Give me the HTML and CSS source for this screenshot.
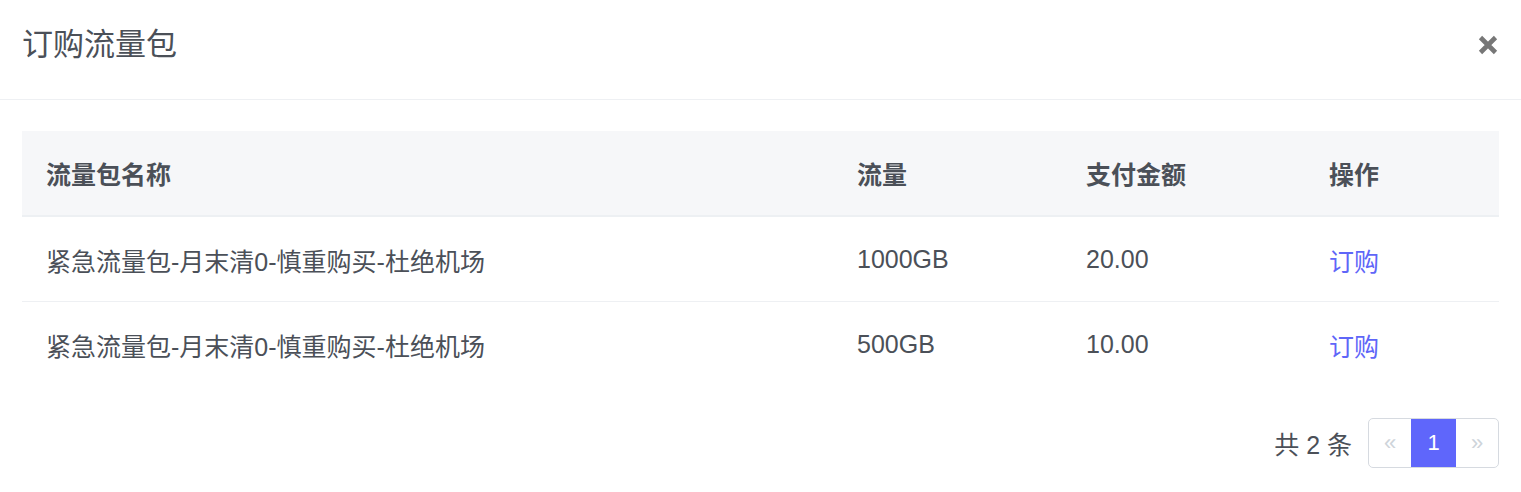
FILE: index.html
```html
<!DOCTYPE html>
<html lang="zh-CN">
<head>
<meta charset="utf-8">
<title>订购流量包</title>
<link rel="stylesheet" href="styles.css">
</head>
<body>
<div class="modal">
  <div class="modal-header">
    <h3 class="modal-title">订购流量包</h3>
    <button class="close" type="button" aria-label="关闭">
      <svg width="20" height="20" viewBox="0 0 20 20"><path d="M2.5 2.5 L17.5 17.5 M17.5 2.5 L2.5 17.5" stroke="#777" stroke-width="4.6" stroke-linecap="butt"/></svg>
    </button>
  </div>
  <div class="modal-body">
    <table class="table">
      <colgroup>
        <col class="c1"><col class="c2"><col class="c3"><col class="c4">
      </colgroup>
      <thead>
        <tr><th>流量包名称</th><th>流量</th><th>支付金额</th><th>操作</th></tr>
      </thead>
      <tbody>
        <tr><td>紧急流量包-月末清0-慎重购买-杜绝机场</td><td>1000GB</td><td>20.00</td><td><a class="link" href="#">订购</a></td></tr>
        <tr><td>紧急流量包-月末清0-慎重购买-杜绝机场</td><td>500GB</td><td>10.00</td><td><a class="link" href="#">订购</a></td></tr>
      </tbody>
    </table>
    <div class="footer">
      <span class="total">共 2 条</span>
      <div class="pager">
        <span class="pg disabled">«</span>
        <span class="pg active">1</span>
        <span class="pg disabled">»</span>
      </div>
    </div>
  </div>
</div>
</body>
</html>
```

FILE: styles.css
```css
* { box-sizing: border-box; }
html, body { margin: 0; padding: 0; background: #fff; }
body {
  font-family: "Liberation Sans", "Noto Sans CJK SC", sans-serif;
  color: #495057;
}
.modal { width: 1521px; }
.modal-header {
  height: 100px;
  border-bottom: 1px solid #eef0f3;
  display: flex;
  align-items: center;
  justify-content: space-between;
  padding: 0 22px 10px 22px;
}
.modal-title {
  margin: 0;
  font-size: 31px;
  font-weight: 400;
  color: #4b5058;
  line-height: 1;
}
.close {
  border: 0;
  background: none;
  padding: 0;
  margin-right: 1px;
  display: flex;
  cursor: pointer;
}
.modal-body { padding: 31px 22px 0 22px; }
.table {
  width: 1477px;
  border-collapse: collapse;
  table-layout: fixed;
}
.c1 { width: 811px; }
.c2 { width: 229px; }
.c3 { width: 243px; }
.c4 { width: 194px; }
.table th {
  background: #f6f7f9;
  height: 85px;
  text-align: left;
  padding: 0 24px;
  font-size: 25px;
  font-weight: 700;
  color: #4b5058;
  border-bottom: 2px solid #edf0f3;
}
.table td {
  height: 85px;
  padding: 2px 24px 0 24px;
  font-size: 25px;
  color: #4b5058;
  border-top: 1px solid #eef0f3;
}
.table tbody tr:first-child td { border-top: 0; }
.link { color: #5f66f8; text-decoration: none; }
.footer {
  display: flex;
  justify-content: flex-end;
  align-items: center;
  gap: 16px;
  margin-top: 32px;
}
.total { font-size: 25px; color: #4b5058; }
.pager {
  display: flex;
  height: 50px;
  border: 1px solid #d6dae0;
  border-radius: 5px;
  overflow: hidden;
}
.pg {
  width: 42px;
  display: flex;
  align-items: center;
  justify-content: center;
  font-size: 22px;
}
.pg.disabled { color: #ced4da; }
.pg.active { background: #5f66fb; color: #fff; width: 45px; }
```
